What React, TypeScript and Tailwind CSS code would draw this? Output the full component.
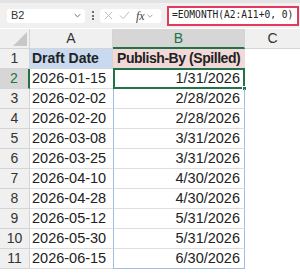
import React from "react";

const rows = [
  ["2026-01-15", "1/31/2026"],
  ["2026-02-02", "2/28/2026"],
  ["2026-02-20", "2/28/2026"],
  ["2026-03-08", "3/31/2026"],
  ["2026-03-25", "3/31/2026"],
  ["2026-04-10", "4/30/2026"],
  ["2026-04-28", "4/30/2026"],
  ["2026-05-12", "5/31/2026"],
  ["2026-05-30", "5/31/2026"],
  ["2026-06-15", "6/30/2026"],
];

const cellFont = { fontFamily: '"Liberation Sans", Arial, sans-serif' };

function Chevron({ className }: { className?: string }) {
  return (
    <svg viewBox="0 0 10 6" className={className} fill="none" stroke="currentColor" strokeWidth="1.2">
      <path d="M1 1l4 4 4-4" />
    </svg>
  );
}

export default function App() {
  return (
    <div className="w-[300px] h-[273px] bg-white overflow-hidden text-[#222]" style={cellFont}>
      {/* formula bar */}
      <div className="h-[28px] bg-[#f0f0f0] border-t-[3px] border-[#e3e3e3] flex items-center">
        <div className="ml-[7px] w-[78px] h-[14px] bg-white rounded-[3px] flex items-center justify-between px-[4px]">
          <span className="text-[11px] text-[#333]">B2</span>
          <Chevron className="w-[7px] h-[5px] text-[#555]" />
        </div>
        <div className="ml-[7px] flex flex-col gap-[1.5px]">
          <span className="w-[2px] h-[2px] bg-[#444] rounded-full" />
          <span className="w-[2px] h-[2px] bg-[#444] rounded-full" />
          <span className="w-[2px] h-[2px] bg-[#444] rounded-full" />
        </div>
        <div className="ml-[6px] w-[61px] h-[14px] bg-white rounded-[3px] flex items-center px-[4px] text-[#b5b5b5]">
          <svg viewBox="0 0 10 10" className="w-[9px] h-[9px]" stroke="currentColor" strokeWidth="1">
            <path d="M1 1l8 8M9 1l-8 8" />
          </svg>
          <svg viewBox="0 0 12 10" className="ml-[6px] w-[11px] h-[9px]" fill="none" stroke="currentColor" strokeWidth="1">
            <path d="M1 5l3.5 3.5L11 1" />
          </svg>
          <span className="ml-[6px] text-[12px] italic text-[#444] leading-none" style={{ fontFamily: '"Liberation Serif", serif' }}>
            fx
          </span>
          <Chevron className="ml-[2px] w-[6px] h-[4px] text-[#888]" />
        </div>
        <div className="ml-auto mr-[1px] w-[132px] h-[20px] bg-white border-2 border-[#e23a5d] flex items-center pl-[3px]">
          <span className="text-[9.6px] text-[#222]" style={{ fontFamily: '"DejaVu Sans Mono", monospace' }}>
            =EOMONTH(A2:A11+0, 0)
          </span>
        </div>
      </div>

      {/* sheet grid */}
      <div className="grid grid-cols-[30px_83px_132px_55px] auto-rows-[20px] pt-[1px]">
        {/* column headers */}
        <div className="bg-[#f0f0f0] border-r border-b border-[#d4d4d4] flex items-end justify-end p-[2px]">
          <svg viewBox="0 0 10 10" className="w-[14px] h-[14px]">
            <path d="M10 0V10H0Z" fill="#c8c8c8" />
          </svg>
        </div>
        <div className="bg-[#f0f0f0] border-r border-b border-[#d4d4d4] flex items-center justify-center text-[14px] text-[#333]">
          A
        </div>
        <div className="bg-[#d6d6d6] border-r border-[#d4d4d4] border-b-2 border-b-[#217346] flex items-center justify-center text-[14px] text-[#217346]">
          B
        </div>
        <div className="bg-[#f0f0f0] border-b border-[#d4d4d4] flex items-center justify-center text-[14px] text-[#333]">
          C
        </div>

        {/* header row */}
        <div className="bg-[#f0f0f0] border-r border-b border-[#d4d4d4] flex items-center justify-center text-[14px] text-[#333]">
          1
        </div>
        <div className="bg-[#c9daf0] border-r border-b border-[#d4d4d4] flex items-center pl-[2px] text-[14px] font-bold">
          Draft Date
        </div>
        <div className="bg-[#f0d9d8] border-b border-[#d4d4d4] flex items-center pl-[4px] text-[14px] font-bold tracking-[-0.45px]">
          Publish-By (Spilled)
        </div>
        <div />

        {rows.map(([a, b], i) => {
          const r = i + 2;
          const selected = r === 2;
          const last = r === 11;
          return (
            <React.Fragment key={r}>
              <div
                className={`border-r border-b border-[#d4d4d4] flex items-center justify-center text-[14px] ${
                  selected ? "bg-[#d6d6d6] text-[#217346] border-r-2 border-r-[#217346]" : "bg-[#f0f0f0] text-[#333]"
                }`}
              >
                {r}
              </div>
              <div className="border-b border-[#dedede] flex items-center pl-[2px] text-[14.5px]">{a}</div>
              <div
                className={`relative flex items-center justify-end pr-[4px] text-[14.5px] border-l border-r border-[#9fbde3] ${
                  last ? "border-b border-b-[#9fbde3]" : "border-b border-b-[#dedede]"
                }`}
              >
                {b}
                {selected && (
                  <>
                    <div className="absolute -left-px -top-px -right-px -bottom-px border-2 border-[#217346]" />
                    <div className="absolute -right-[3px] -bottom-[3px] w-[5px] h-[5px] bg-[#217346] border border-white" />
                  </>
                )}
              </div>
              <div />
            </React.Fragment>
          );
        })}
      </div>
    </div>
  );
}
